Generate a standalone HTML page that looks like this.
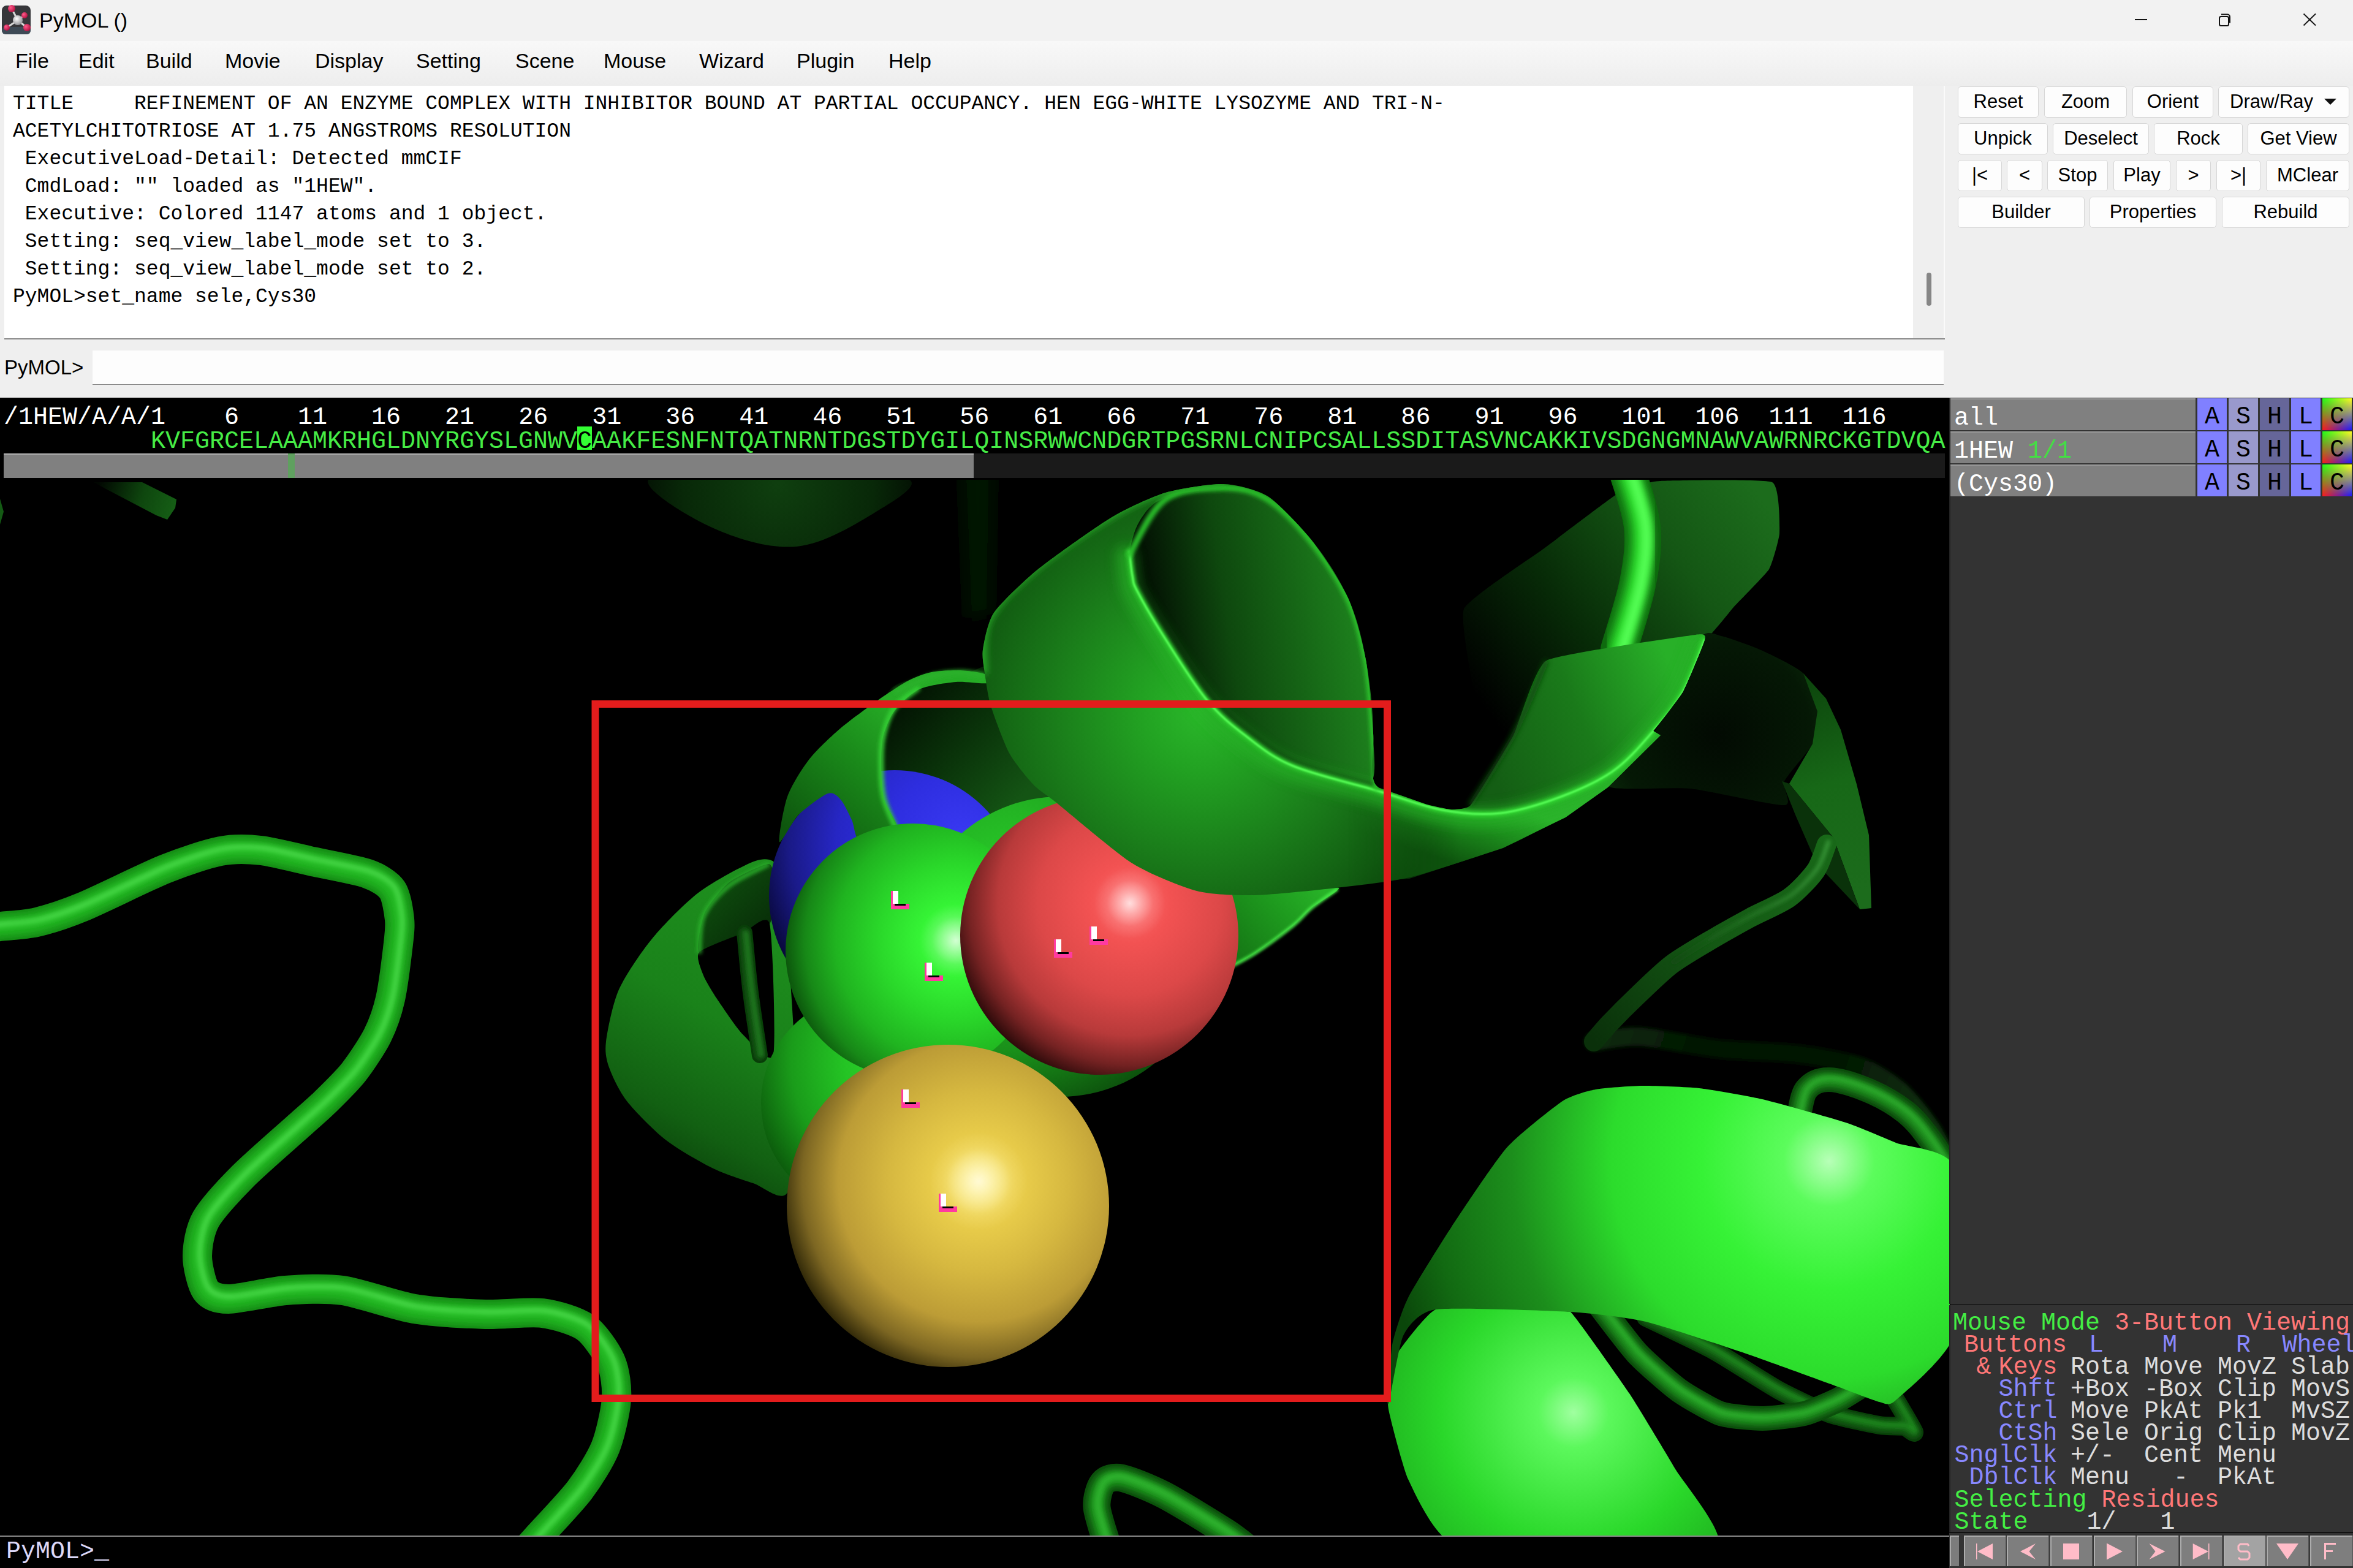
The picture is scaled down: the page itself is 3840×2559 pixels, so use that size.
<!DOCTYPE html>
<html><head><meta charset="utf-8">
<style>
html,body{margin:0;padding:0;}
body{width:3840px;height:2559px;overflow:hidden;position:relative;background:#efefef;font-family:"Liberation Sans",sans-serif;}
.a{position:absolute;white-space:pre;}
#title{left:0;top:0;width:3840px;height:67px;background:#f2f2f2;}
#menubar{left:0;top:67px;width:3840px;height:73px;background:linear-gradient(#f8f8f8,#f3f3f3 50%,#ededed);}
.menu{position:absolute;top:79px;font-size:34px;color:#000;line-height:40px;}
#out{left:7px;top:140px;width:3115px;height:412px;background:#fff;}
#outscroll{left:3122px;top:140px;width:50px;height:412px;background:#efefef;border-right:2px solid #fafafa;}
#outline{left:7px;top:552px;width:3167px;height:1.5px;background:#8a8a8a;}
.mono{font-family:"Liberation Mono",monospace;font-size:33px;color:#000;}
#inp{left:151px;top:572px;width:3021px;height:55px;background:#fdfdfd;border-bottom:1.5px solid #8a8a8a;}
.btn{position:absolute;box-sizing:border-box;background:#fdfdfd;border:1.5px solid #d6d6d6;border-radius:5px;font-size:31px;color:#000;text-align:center;line-height:48px;}
#gl{left:0;top:649px;width:3840px;height:1910px;background:#000;overflow:hidden;}
.px{font-family:"Liberation Mono",monospace;font-size:40px;line-height:40px;}
</style></head><body>
<div id="title" class="a"></div>
<div id="menubar" class="a"></div>
<!-- icon -->
<svg class="a" style="left:0;top:0" width="60" height="64" viewBox="0 0 60 64"><defs><radialGradient id="icg" cx="0.4" cy="0.35" r="0.7"><stop offset="0" stop-color="#ffffff"/><stop offset="1" stop-color="#8a8a90"/></radialGradient><radialGradient id="icp" cx="0.35" cy="0.35" r="0.7"><stop offset="0" stop-color="#ff5a8a"/><stop offset="1" stop-color="#b01040"/></radialGradient></defs>
<rect x="3" y="9" width="47" height="47" rx="8" fill="#36363a"/><rect x="3" y="44" width="47" height="12" rx="6" fill="#3e4a56"/>
<path d="M19,14 L29,33 M40,25 L29,33 M44,45 L29,33 M11,45 L29,33" stroke="#d8d8d8" stroke-width="3"/>
<circle cx="29" cy="33" r="8" fill="url(#icg)"/><circle cx="19" cy="14" r="6" fill="url(#icp)"/><circle cx="40" cy="25" r="5" fill="url(#icp)"/><circle cx="44" cy="45" r="6" fill="url(#icp)"/><circle cx="11" cy="45" r="5" fill="url(#icp)"/></svg>
<div class="a" style="left:64px;top:13px;font-size:34px;line-height:40px;color:#000;">PyMOL ()</div>
<!-- window controls -->
<svg class="a" style="left:3440px;top:0" width="400" height="67" viewBox="3440 0 400 67">
<rect x="3484" y="31" width="20" height="2" fill="#111"/>
<rect x="3622" y="27" width="15" height="15" rx="2.5" fill="none" stroke="#111" stroke-width="2"/>
<path d="M3625,23.5 h10 a4,4 0 0 1 4,4 v10" fill="none" stroke="#111" stroke-width="2"/>
<path d="M3759.5,22.5 L3779,41.5 M3779,22.5 L3759.5,41.5" stroke="#111" stroke-width="1.8"/>
</svg>
<div class="menu" style="left:25px">File</div>
<div class="menu" style="left:128px">Edit</div>
<div class="menu" style="left:238px">Build</div>
<div class="menu" style="left:367px">Movie</div>
<div class="menu" style="left:514px">Display</div>
<div class="menu" style="left:679px">Setting</div>
<div class="menu" style="left:841px">Scene</div>
<div class="menu" style="left:985px">Mouse</div>
<div class="menu" style="left:1141px">Wizard</div>
<div class="menu" style="left:1300px">Plugin</div>
<div class="menu" style="left:1450px">Help</div>

<div id="out" class="a"></div>
<div id="outscroll" class="a"></div>
<div class="a" style="left:3144px;top:445px;width:7.5px;height:54px;border-radius:4px;background:#868686;"></div>
<div id="outline" class="a"></div>
<div class="a mono" style="left:21px;top:147px;line-height:45px;">TITLE     REFINEMENT OF AN ENZYME COMPLEX WITH INHIBITOR BOUND AT PARTIAL OCCUPANCY. HEN EGG-WHITE LYSOZYME AND TRI-N-
ACETYLCHITOTRIOSE AT 1.75 ANGSTROMS RESOLUTION
 ExecutiveLoad-Detail: Detected mmCIF
 CmdLoad: "" loaded as "1HEW".
 Executive: Colored 1147 atoms and 1 object.
 Setting: seq_view_label_mode set to 3.
 Setting: seq_view_label_mode set to 2.
PyMOL&gt;set_name sele,Cys30</div>

<div class="a" style="left:7px;top:580px;font-size:33px;line-height:40px;">PyMOL&gt;</div>
<div id="inp" class="a"></div>

<!-- buttons -->
<div class="btn" style="left:3195px;top:141px;width:132px;height:51px;">Reset</div>
<div class="btn" style="left:3336px;top:141px;width:135px;height:51px;">Zoom</div>
<div class="btn" style="left:3480px;top:141px;width:132px;height:51px;">Orient</div>
<div class="btn" style="left:3620px;top:141px;width:214px;height:51px;text-align:left;padding-left:18px;">Draw/Ray</div>
<svg class="a" style="left:3790px;top:155px" width="28" height="20"><polygon points="3,6 23,6 13,16" fill="#111"/></svg>
<div class="btn" style="left:3195px;top:201px;width:147px;height:51px;">Unpick</div>
<div class="btn" style="left:3350px;top:201px;width:157px;height:51px;">Deselect</div>
<div class="btn" style="left:3515px;top:201px;width:145px;height:51px;">Rock</div>
<div class="btn" style="left:3668px;top:201px;width:166px;height:51px;">Get View</div>
<div class="btn" style="left:3195px;top:261px;width:72px;height:51px;">|&lt;</div>
<div class="btn" style="left:3275px;top:261px;width:58px;height:51px;">&lt;</div>
<div class="btn" style="left:3341px;top:261px;width:99px;height:51px;">Stop</div>
<div class="btn" style="left:3449px;top:261px;width:93px;height:51px;">Play</div>
<div class="btn" style="left:3551px;top:261px;width:57px;height:51px;">&gt;</div>
<div class="btn" style="left:3617px;top:261px;width:72px;height:51px;">&gt;|</div>
<div class="btn" style="left:3698px;top:261px;width:136px;height:51px;">MClear</div>
<div class="btn" style="left:3195px;top:321px;width:207px;height:51px;">Builder</div>
<div class="btn" style="left:3410px;top:321px;width:207px;height:51px;">Properties</div>
<div class="btn" style="left:3626px;top:321px;width:208px;height:51px;">Rebuild</div>

<div id="gl" class="a">
<div id="scene" class="a" style="left:0;top:0;width:3182px;height:1857px;"><svg width="3182" height="1857" viewBox="0 649 3182 1857"><defs><filter id="bl1" x="-50%" y="-50%" width="200%" height="200%"><feGaussianBlur stdDeviation="1"/></filter><filter id="bl2" x="-50%" y="-50%" width="200%" height="200%"><feGaussianBlur stdDeviation="2"/></filter><filter id="bl3" x="-50%" y="-50%" width="200%" height="200%"><feGaussianBlur stdDeviation="3"/></filter><filter id="bl4" x="-50%" y="-50%" width="200%" height="200%"><feGaussianBlur stdDeviation="4"/></filter><filter id="bl5" x="-50%" y="-50%" width="200%" height="200%"><feGaussianBlur stdDeviation="5"/></filter><filter id="bl6" x="-50%" y="-50%" width="200%" height="200%"><feGaussianBlur stdDeviation="6"/></filter><filter id="bl8" x="-50%" y="-50%" width="200%" height="200%"><feGaussianBlur stdDeviation="8"/></filter><filter id="bl10" x="-50%" y="-50%" width="200%" height="200%"><feGaussianBlur stdDeviation="10"/></filter><filter id="bl12" x="-50%" y="-50%" width="200%" height="200%"><feGaussianBlur stdDeviation="12"/></filter><filter id="bl15" x="-50%" y="-50%" width="200%" height="200%"><feGaussianBlur stdDeviation="15"/></filter><filter id="bl20" x="-50%" y="-50%" width="200%" height="200%"><feGaussianBlur stdDeviation="20"/></filter><filter id="bl30" x="-50%" y="-50%" width="200%" height="200%"><feGaussianBlur stdDeviation="30"/></filter><filter id="bl40" x="-50%" y="-50%" width="200%" height="200%"><feGaussianBlur stdDeviation="40"/></filter><filter id="b3" x="-10%" y="-10%" width="120%" height="120%"><feGaussianBlur stdDeviation="4"/></filter><filter id="b8" x="-20%" y="-20%" width="140%" height="140%"><feGaussianBlur stdDeviation="8"/></filter><filter id="b20" x="-30%" y="-30%" width="160%" height="160%"><feGaussianBlur stdDeviation="20"/></filter><radialGradient id="gTopEll" gradientUnits="userSpaceOnUse" cx="1270" cy="790" r="260" fx="1270" fy="790"><stop offset="0" stop-color="#0f3f0f"/><stop offset="0.6" stop-color="#082808"/><stop offset="1" stop-color="#010501"/></radialGradient><linearGradient id="gFaint" gradientUnits="userSpaceOnUse" x1="1560" y1="900" x2="1620" y2="900"><stop offset="0" stop-color="#000"/><stop offset="0.5" stop-color="#041404"/><stop offset="1" stop-color="#000"/></linearGradient><linearGradient id="gT2" gradientUnits="userSpaceOnUse" x1="160" y1="790" x2="290" y2="830"><stop offset="0" stop-color="#010601"/><stop offset="0.55" stop-color="#0e460e"/><stop offset="1" stop-color="#166016"/></linearGradient><linearGradient id="gA" gradientUnits="userSpaceOnUse" x1="2420" y1="1150" x2="2880" y2="820"><stop offset="0" stop-color="#000"/><stop offset="0.35" stop-color="#072a07"/><stop offset="0.7" stop-color="#145614"/><stop offset="1" stop-color="#1c6c1c"/></linearGradient><mask id="tm1" maskUnits="userSpaceOnUse" x="0" y="600" width="3200" height="2000"><path d="M2656.0,770.0 C2660.0,785.0 2677.2,830.0 2680.0,860.0 C2682.8,890.0 2679.3,916.7 2673.0,950.0 C2666.7,983.3 2647.2,1041.7 2642.0,1060.0" fill="none" stroke="#fff" stroke-width="60.0" stroke-linecap="round" stroke-linejoin="round"/></mask><radialGradient id="gD" gradientUnits="userSpaceOnUse" cx="2800" cy="1200" r="260" fx="2800" fy="1200"><stop offset="0" stop-color="#020a02"/><stop offset="0.6" stop-color="#051805"/><stop offset="1" stop-color="#0e3c0e"/></radialGradient><linearGradient id="gE" gradientUnits="userSpaceOnUse" x1="2950" y1="1100" x2="3050" y2="1450"><stop offset="0" stop-color="#0c440c"/><stop offset="0.5" stop-color="#176817"/><stop offset="1" stop-color="#1c6c1c"/></linearGradient><linearGradient id="gT4b" gradientUnits="userSpaceOnUse" x1="2600" y1="1700" x2="3180" y2="1900"><stop offset="0" stop-color="#0a2c0a"/><stop offset="0.3" stop-color="#041404"/><stop offset="0.6" stop-color="#041404"/><stop offset="1" stop-color="#0e3a0e"/></linearGradient><linearGradient id="gT4" gradientUnits="userSpaceOnUse" x1="2981" y1="1375" x2="2601" y2="1700"><stop offset="0" stop-color="#186818"/><stop offset="0.5" stop-color="#145814"/><stop offset="1" stop-color="#0a300a"/></linearGradient><linearGradient id="gT4h" gradientUnits="userSpaceOnUse" x1="2981" y1="1375" x2="2700" y2="1600"><stop offset="0" stop-color="#3a9a3a"/><stop offset="0.6" stop-color="#1e6a1e"/><stop offset="1" stop-color="#0e3e0e"/></linearGradient><mask id="tm2" maskUnits="userSpaceOnUse" x="0" y="600" width="3200" height="2000"><path d="M-30.0,1515.0 C-26.0,1514.6 -12.0,1513.3 0.0,1512.0 C12.0,1510.7 42.0,1509.3 60.0,1505.0 C78.0,1500.7 107.0,1491.6 135.0,1480.0 C163.0,1468.4 240.0,1430.1 270.0,1418.0 C300.0,1405.9 339.2,1393.0 360.0,1389.0 C380.8,1385.0 406.0,1385.7 426.0,1388.0 C446.0,1390.3 486.8,1400.9 510.0,1406.0 C533.2,1411.1 582.7,1419.9 600.0,1426.0 C617.3,1432.1 633.1,1442.1 640.0,1452.0 C646.9,1461.9 650.7,1488.3 652.0,1500.0 C653.3,1511.7 652.0,1522.7 650.0,1540.0 C648.0,1557.3 641.5,1610.0 637.0,1630.0 C632.5,1650.0 624.0,1674.0 616.0,1690.0 C608.0,1706.0 588.6,1735.3 577.0,1750.0 C565.4,1764.7 540.7,1788.5 529.0,1800.0 C517.3,1811.5 506.7,1820.0 489.0,1836.0 C471.3,1852.0 416.4,1899.5 396.0,1920.0 C375.6,1940.5 345.9,1972.7 336.0,1990.0 C326.1,2007.3 322.0,2034.5 322.0,2050.0 C322.0,2065.5 329.2,2096.7 336.0,2106.0 C342.8,2115.3 355.7,2120.0 373.0,2120.0 C390.3,2120.0 441.2,2107.9 466.0,2106.0 C490.8,2104.1 531.0,2102.0 559.0,2106.0 C587.0,2110.0 644.9,2130.8 676.0,2136.0 C707.1,2141.2 764.1,2144.1 792.0,2145.0 C819.9,2145.9 863.3,2140.2 885.0,2143.0 C906.7,2145.8 940.1,2155.5 955.0,2166.0 C969.9,2176.5 990.2,2206.4 997.0,2222.0 C1003.8,2237.6 1007.2,2264.3 1006.0,2283.0 C1004.8,2301.7 996.0,2342.1 988.0,2362.0 C980.0,2381.9 960.9,2412.3 946.0,2432.0 C931.1,2451.7 890.1,2494.3 876.0,2510.0 C861.9,2525.7 844.8,2544.7 840.0,2550.0" fill="none" stroke="#fff" stroke-width="48.0" stroke-linecap="round" stroke-linejoin="round"/></mask><mask id="tm3" maskUnits="userSpaceOnUse" x="0" y="600" width="3200" height="2000"><path d="M1810.0,2530.0 C1807.3,2520.7 1791.3,2474.7 1790.0,2460.0 C1788.7,2445.3 1794.7,2426.4 1800.0,2420.0 C1805.3,2413.6 1816.7,2409.3 1830.0,2412.0 C1843.3,2414.7 1877.3,2428.3 1900.0,2440.0 C1922.7,2451.7 1981.3,2488.0 2000.0,2500.0 C2018.7,2512.0 2034.7,2526.0 2040.0,2530.0" fill="none" stroke="#fff" stroke-width="45.0" stroke-linecap="round" stroke-linejoin="round"/></mask><linearGradient id="gH3" gradientUnits="userSpaceOnUse" x1="1250" y1="1450" x2="1010" y2="1880"><stop offset="0" stop-color="#1e901e"/><stop offset="0.45" stop-color="#1a821a"/><stop offset="0.8" stop-color="#126012"/><stop offset="1" stop-color="#0a400a"/></linearGradient><linearGradient id="gH3f" gradientUnits="userSpaceOnUse" x1="1150" y1="1450" x2="1260" y2="1560"><stop offset="0" stop-color="#0e4e0e"/><stop offset="1" stop-color="#062406"/></linearGradient><mask id="tm4" maskUnits="userSpaceOnUse" x="0" y="600" width="3200" height="2000"><path d="M1215.0,1522.0 C1216.7,1538.3 1220.8,1586.7 1225.0,1620.0 C1229.2,1653.3 1237.5,1705.0 1240.0,1722.0" fill="none" stroke="#fff" stroke-width="26.0" stroke-linecap="round" stroke-linejoin="round"/></mask><linearGradient id="gH2in" gradientUnits="userSpaceOnUse" x1="1460" y1="1160" x2="1640" y2="1330"><stop offset="0" stop-color="#031403"/><stop offset="0.5" stop-color="#0a340a"/><stop offset="1" stop-color="#145414"/></linearGradient><radialGradient id="gBlue" gradientUnits="userSpaceOnUse" cx="1570" cy="1380" r="342.20058308913997" fx="1570" fy="1380"><stop offset="0" stop-color="#3a3af4"/><stop offset="0.35" stop-color="#2e2ee0"/><stop offset="0.6" stop-color="#2626c4"/><stop offset="0.82" stop-color="#1a1a88"/><stop offset="1" stop-color="#08083a"/></radialGradient><linearGradient id="gH2" gradientUnits="userSpaceOnUse" x1="1280" y1="1350" x2="1460" y2="1150"><stop offset="0" stop-color="#0e560e"/><stop offset="0.6" stop-color="#1a8a1a"/><stop offset="1" stop-color="#26ac26"/></linearGradient><radialGradient id="gG2" gradientUnits="userSpaceOnUse" cx="1510" cy="1730" r="292.0175425099138" fx="1510" fy="1730"><stop offset="0" stop-color="#34e034"/><stop offset="0.45" stop-color="#24c424"/><stop offset="0.75" stop-color="#1a9c1a"/><stop offset="1" stop-color="#0c5c0c"/></radialGradient><radialGradient id="gG3" gradientUnits="userSpaceOnUse" cx="1640" cy="1450" r="375.862523283024" fx="1640" fy="1450"><stop offset="0" stop-color="#2ad02a"/><stop offset="0.4" stop-color="#22b022"/><stop offset="0.7" stop-color="#1a901a"/><stop offset="1" stop-color="#0c500c"/></radialGradient><radialGradient id="gG1" gradientUnits="userSpaceOnUse" cx="1560" cy="1535" r="280.034713853808" fx="1560" fy="1535"><stop offset="0" stop-color="#60ff60"/><stop offset="0.2" stop-color="#36f536"/><stop offset="0.45" stop-color="#2ad82a"/><stop offset="0.7" stop-color="#20b420"/><stop offset="0.88" stop-color="#178817"/><stop offset="1" stop-color="#0c560c"/></radialGradient><radialGradient id="gG1s"><stop offset="0" stop-color="#d8ffd8" stop-opacity="0.95"/><stop offset="0.3" stop-color="#d8ffd8" stop-opacity="0.55"/><stop offset="0.65" stop-color="#d8ffd8" stop-opacity="0.15"/><stop offset="1" stop-color="#d8ffd8" stop-opacity="0"/></radialGradient><linearGradient id="gRib" gradientUnits="userSpaceOnUse" x1="2000" y1="1600" x2="2180" y2="1450"><stop offset="0" stop-color="#126a12"/><stop offset="0.6" stop-color="#1e9a1e"/><stop offset="1" stop-color="#2ab82a"/></linearGradient><radialGradient id="gRed" gradientUnits="userSpaceOnUse" cx="1844" cy="1474" r="299.8628849277875" fx="1844" fy="1474"><stop offset="0" stop-color="#ff6c6c"/><stop offset="0.22" stop-color="#f25252"/><stop offset="0.5" stop-color="#dc4848"/><stop offset="0.72" stop-color="#b83a3a"/><stop offset="0.88" stop-color="#742222"/><stop offset="1" stop-color="#2c0a0a"/></radialGradient><radialGradient id="gReds"><stop offset="0" stop-color="#ffe4e4" stop-opacity="0.95"/><stop offset="0.3" stop-color="#ffe4e4" stop-opacity="0.55"/><stop offset="0.65" stop-color="#ffe4e4" stop-opacity="0.15"/><stop offset="1" stop-color="#ffe4e4" stop-opacity="0"/></radialGradient><radialGradient id="gYel" gradientUnits="userSpaceOnUse" cx="1597" cy="1928" r="327.0312423743285" fx="1597" fy="1928"><stop offset="0" stop-color="#fff07a"/><stop offset="0.18" stop-color="#ecd04c"/><stop offset="0.45" stop-color="#d6b840"/><stop offset="0.7" stop-color="#bc9c36"/><stop offset="0.88" stop-color="#7c6622"/><stop offset="1" stop-color="#302808"/></radialGradient><radialGradient id="gYels"><stop offset="0" stop-color="#fffad8" stop-opacity="0.95"/><stop offset="0.3" stop-color="#fffad8" stop-opacity="0.55"/><stop offset="0.65" stop-color="#fffad8" stop-opacity="0.15"/><stop offset="1" stop-color="#fffad8" stop-opacity="0"/></radialGradient><radialGradient id="gH1" gradientUnits="userSpaceOnUse" cx="1960" cy="1160" r="440" fx="1960" fy="1160"><stop offset="0" stop-color="#2ab82a"/><stop offset="0.22" stop-color="#22a222"/><stop offset="0.55" stop-color="#1a7c1a"/><stop offset="0.85" stop-color="#115a11"/><stop offset="1" stop-color="#0a420a"/></radialGradient><linearGradient id="gH1in" gradientUnits="userSpaceOnUse" x1="1880" y1="1000" x2="2220" y2="950"><stop offset="0" stop-color="#031203"/><stop offset="0.35" stop-color="#0e480e"/><stop offset="1" stop-color="#1e841e"/></linearGradient><linearGradient id="gLow" gradientUnits="userSpaceOnUse" x1="2470" y1="1318" x2="2430" y2="1430"><stop offset="0" stop-color="#2cb42c"/><stop offset="0.35" stop-color="#1e921e"/><stop offset="1" stop-color="#0e540e"/></linearGradient><linearGradient id="gLowM" gradientUnits="userSpaceOnUse" x1="2200" y1="0" x2="2380" y2="0"><stop offset="0" stop-color="#000"/><stop offset="1" stop-color="#fff"/></linearGradient><mask id="mLow" maskUnits="userSpaceOnUse" x="2100" y="1100" width="800" height="400"><rect x="2100" y="1100" width="800" height="400" fill="url(#gLowM)"/></mask><linearGradient id="gC" gradientUnits="userSpaceOnUse" x1="2430" y1="1250" x2="2740" y2="1120"><stop offset="0" stop-color="#145e14"/><stop offset="0.5" stop-color="#1a7a1a"/><stop offset="1" stop-color="#28b028"/></linearGradient><clipPath id="cH1"><path d="M1604.0,1060.0 C1605.8,1048.6 1611.5,1015.3 1622.0,1000.0 C1632.5,984.7 1671.7,947.1 1694.0,929.0 C1716.3,910.9 1788.7,859.6 1813.0,845.0 C1837.3,830.4 1880.5,810.4 1902.0,804.0 C1923.5,797.6 1977.5,789.3 1997.0,790.0 C2016.5,790.7 2052.3,799.4 2069.0,810.0 C2085.7,820.6 2124.7,861.6 2140.0,881.0 C2155.3,900.4 2189.6,953.1 2200.0,976.0 C2210.4,998.9 2224.2,1051.2 2229.0,1077.0 C2233.8,1102.8 2239.0,1173.1 2241.0,1197.0 C2243.0,1220.9 2233.3,1267.9 2246.0,1282.0 C2258.7,1296.1 2326.3,1312.8 2350.0,1318.0 C2373.7,1323.2 2425.9,1328.9 2449.0,1327.0 C2472.1,1325.1 2527.5,1307.1 2548.0,1302.0 C2568.5,1296.9 2627.1,1278.1 2625.0,1283.0 C2622.9,1287.9 2550.1,1332.3 2530.0,1344.0 C2509.9,1355.7 2479.8,1372.7 2453.0,1383.0 C2426.2,1393.3 2331.7,1424.3 2300.0,1432.0 C2268.3,1439.7 2210.4,1445.6 2181.0,1449.0 C2151.6,1452.4 2074.6,1460.4 2048.0,1461.0 C2021.4,1461.6 1976.3,1460.1 1953.0,1454.0 C1929.7,1447.9 1874.7,1425.8 1848.0,1409.0 C1821.3,1392.2 1742.9,1325.0 1724.0,1310.0 C1705.1,1295.0 1695.0,1289.5 1686.0,1280.0 C1677.0,1270.5 1655.0,1243.9 1647.0,1229.0 C1639.0,1214.1 1621.7,1167.3 1617.0,1152.0 C1612.3,1136.7 1608.5,1108.7 1607.0,1098.0 C1605.5,1087.3 1602.2,1071.4 1604.0,1060.0Z"/><path d="M2524.0,1078.0 C2543.8,1067.1 2749.8,1038.3 2767.0,1036.0 C2784.2,1033.7 2783.3,1037.9 2782.0,1044.0 C2780.7,1050.1 2752.6,1118.1 2747.0,1128.0 C2741.4,1137.9 2705.6,1184.3 2698.0,1193.0 C2690.4,1201.7 2643.0,1250.9 2633.0,1258.0 C2623.0,1265.1 2560.3,1295.4 2548.0,1300.0 C2535.7,1304.6 2461.9,1325.5 2449.0,1327.0 C2436.1,1328.5 2357.3,1322.8 2354.0,1322.0 C2350.7,1321.2 2391.3,1323.1 2399.0,1315.0 C2406.7,1306.9 2461.7,1215.8 2470.0,1200.0 C2478.3,1184.2 2504.2,1088.9 2524.0,1078.0Z"/><path d="M2200.0,1270.0 L2246.0,1284.0 L2354.0,1322.0 L2449.0,1327.0 L2548.0,1300.0 L2633.0,1258.0 L2698.0,1193.0 L2710.0,1200.0 L2624.0,1285.0 L2555.0,1334.0 L2453.0,1384.0 L2300.0,1434.0 L2200.0,1441.0Z"/></clipPath><radialGradient id="gBR" gradientUnits="userSpaceOnUse" cx="2985" cy="1895" r="740" fx="2985" fy="1895"><stop offset="0" stop-color="#b8ffb8"/><stop offset="0.1" stop-color="#5cfc5c"/><stop offset="0.28" stop-color="#36f236"/><stop offset="0.48" stop-color="#2cdc2c"/><stop offset="0.7" stop-color="#1c8e1c"/><stop offset="0.88" stop-color="#126a12"/><stop offset="1" stop-color="#0a460a"/></radialGradient><radialGradient id="gBR2" gradientUnits="userSpaceOnUse" cx="2568" cy="2305" r="480" fx="2568" fy="2305"><stop offset="0" stop-color="#a0ffa0"/><stop offset="0.12" stop-color="#5cf85c"/><stop offset="0.45" stop-color="#2ad82a"/><stop offset="0.8" stop-color="#1aa01a"/><stop offset="1" stop-color="#107010"/></radialGradient><mask id="tm5" maskUnits="userSpaceOnUse" x="0" y="600" width="3200" height="2000"><path d="M2935.0,1825.0 C2937.2,1817.2 2939.7,1788.5 2948.0,1778.0 C2956.3,1767.5 2968.0,1761.7 2985.0,1762.0 C3002.0,1762.3 3029.2,1771.2 3050.0,1780.0 C3070.8,1788.8 3093.3,1801.7 3110.0,1815.0 C3126.7,1828.3 3137.5,1843.3 3150.0,1860.0 C3162.5,1876.7 3179.2,1905.8 3185.0,1915.0" fill="none" stroke="#fff" stroke-width="40.0" stroke-linecap="round" stroke-linejoin="round"/></mask><mask id="tm6" maskUnits="userSpaceOnUse" x="0" y="600" width="3200" height="2000"><path d="M2686.0,2150.0 C2696.9,2155.3 2773.3,2191.1 2795.0,2203.0 C2816.7,2214.9 2884.0,2258.6 2903.0,2269.0 C2922.0,2279.4 2968.6,2301.3 2985.0,2307.0 C3001.4,2312.7 3054.8,2323.9 3067.0,2326.0 C3079.2,2328.1 3101.3,2326.9 3107.0,2328.0 C3112.7,2329.1 3125.3,2341.3 3124.0,2337.0 C3122.7,2332.7 3097.0,2290.2 3094.0,2285.0" fill="none" stroke="#fff" stroke-width="30.0" stroke-linecap="round" stroke-linejoin="round"/></mask><mask id="tm7" maskUnits="userSpaceOnUse" x="0" y="600" width="3200" height="2000"><path d="M2610.0,2130.0 C2616.2,2137.9 2659.0,2195.1 2672.0,2209.0 C2685.0,2222.9 2726.4,2259.2 2740.0,2269.0 C2753.6,2278.8 2794.4,2302.4 2808.0,2307.0 C2821.6,2311.6 2862.4,2315.0 2876.0,2315.0 C2889.6,2315.0 2931.7,2310.0 2944.0,2307.0 C2956.3,2304.0 2989.4,2289.7 2999.0,2285.0 C3008.6,2280.3 3035.9,2262.5 3040.0,2260.0" fill="none" stroke="#fff" stroke-width="40.0" stroke-linecap="round" stroke-linejoin="round"/></mask></defs><path d="M1060.0,781.0 C1078.3,767.8 1200.0,781.0 1270.0,781.0 C1340.0,781.0 1453.3,772.0 1480.0,781.0 C1506.7,790.0 1460.0,816.5 1430.0,835.0 C1400.0,853.5 1345.0,887.8 1300.0,892.0 C1255.0,896.2 1200.0,878.5 1160.0,860.0 C1120.0,841.5 1041.7,794.2 1060.0,781.0Z" fill="url(#gTopEll)"/>
<path d="M1568.0,760.0 L1622.0,760.0 L1618.0,1000.0 L1578.0,1010.0Z" fill="#041404" filter="url(#bl12)"/>
<path d="M153.0,787.0 L232.0,787.0 L288.0,815.0 L286.0,829.0 L273.0,848.0 L255.0,841.0 L173.0,798.0Z" fill="url(#gT2)"/>
<path d="M0.0,814.0 L6.0,835.0 L0.0,856.0Z" fill="#145a14"/>
<path d="M2389.0,994.0 C2396.3,977.0 2502.7,907.9 2520.0,895.0 C2537.3,882.1 2635.3,807.3 2648.0,800.0 C2660.7,792.7 2693.7,785.9 2710.0,785.0 C2726.3,784.1 2879.1,781.3 2892.0,787.0 C2904.9,792.7 2904.3,860.5 2904.0,870.0 C2903.7,879.5 2891.9,921.0 2887.0,929.0 C2882.1,937.0 2837.3,982.0 2830.0,990.0 C2822.7,998.0 2792.3,1038.3 2777.0,1049.0 C2761.7,1059.7 2621.9,1138.1 2600.0,1150.0 C2578.1,1161.9 2461.7,1228.0 2449.0,1228.0 C2436.3,1228.0 2414.0,1165.6 2410.0,1150.0 C2406.0,1134.4 2381.7,1011.0 2389.0,994.0Z" fill="url(#gA)"/>
<path d="M2656.0,770.0 C2660.0,785.0 2677.2,830.0 2680.0,860.0 C2682.8,890.0 2679.3,916.7 2673.0,950.0 C2666.7,983.3 2647.2,1041.7 2642.0,1060.0" fill="none" stroke="#0e6a0e" stroke-width="60.0" stroke-linecap="round" stroke-linejoin="round"/>
<g mask="url(#tm1)">
<path d="M2656.0,770.0 C2660.0,785.0 2677.2,830.0 2680.0,860.0 C2682.8,890.0 2679.3,916.7 2673.0,950.0 C2666.7,983.3 2647.2,1041.7 2642.0,1060.0" fill="none" stroke="#2ad82a" stroke-width="36.0" stroke-linecap="round" stroke-linejoin="round" filter="url(#bl8)"/>
<path d="M2656.0,770.0 C2660.0,785.0 2677.2,830.0 2680.0,860.0 C2682.8,890.0 2679.3,916.7 2673.0,950.0 C2666.7,983.3 2647.2,1041.7 2642.0,1060.0" transform="translate(6,0)" fill="none" stroke="#55ff55" stroke-width="18.0" stroke-linecap="round" stroke-linejoin="round" filter="url(#bl6)"/>
</g>
<path d="M2774.0,1042.0 C2785.1,1025.9 2799.0,1036.1 2809.0,1038.0 C2819.0,1039.9 2860.6,1054.9 2874.0,1061.0 C2887.4,1067.1 2933.8,1089.0 2943.0,1099.0 C2952.2,1109.0 2964.5,1149.5 2966.0,1161.0 C2967.5,1172.5 2963.4,1202.6 2958.0,1214.0 C2952.6,1225.4 2916.6,1265.0 2912.0,1275.0 C2907.4,1285.0 2927.3,1312.8 2912.0,1314.0 C2896.7,1315.2 2787.7,1290.1 2759.0,1287.0 C2730.3,1283.9 2631.1,1291.8 2625.0,1283.0 C2618.9,1274.2 2683.1,1223.1 2698.0,1199.0 C2712.9,1174.9 2762.9,1058.1 2774.0,1042.0Z" fill="url(#gD)"/>
<path d="M2943.0,1099.0 L2980.0,1140.0 L3004.0,1191.0 L3030.0,1280.0 L3050.0,1363.0 L3054.0,1482.0 L3035.0,1484.0 L2992.0,1367.0 L2920.0,1279.0 L2958.0,1214.0 L2966.0,1161.0Z" fill="url(#gE)"/>
<path d="M2908.0,1275.0 L2920.0,1279.0 L2992.0,1367.0 L3035.0,1484.0 L2965.0,1410.0 L2930.0,1330.0Z" fill="#0a320a"/>
<path d="M2601.0,1700.0 C2611.1,1698.9 2649.8,1690.4 2677.0,1692.0 C2704.2,1693.6 2771.0,1708.3 2805.0,1712.0 C2839.0,1715.7 2901.5,1716.3 2932.0,1720.0 C2962.5,1723.7 3011.6,1732.0 3034.0,1740.0 C3056.4,1748.0 3084.5,1766.7 3100.0,1780.0 C3115.5,1793.3 3138.7,1823.3 3150.0,1840.0 C3161.3,1856.7 3180.3,1896.3 3185.0,1905.0" fill="none" stroke="url(#gT4b)" stroke-width="30" stroke-linecap="round" stroke-linejoin="round" filter="url(#bl3)"/>
<path d="M2981.0,1378.0 C2978.6,1383.7 2971.1,1409.4 2963.0,1421.0 C2954.9,1432.6 2934.3,1454.7 2920.0,1465.0 C2905.7,1475.3 2873.1,1488.8 2856.0,1498.0 C2838.9,1507.2 2809.1,1523.9 2792.0,1534.0 C2774.9,1544.1 2744.0,1561.9 2728.0,1574.0 C2712.0,1586.1 2685.6,1612.1 2672.0,1625.0 C2658.4,1637.9 2635.5,1661.0 2626.0,1671.0 C2616.5,1681.0 2604.3,1696.1 2601.0,1700.0" fill="none" stroke="url(#gT4)" stroke-width="32" stroke-linecap="round" stroke-linejoin="round"/>
<path d="M2981.0,1378.0 C2978.6,1383.7 2971.1,1409.4 2963.0,1421.0 C2954.9,1432.6 2934.3,1454.7 2920.0,1465.0 C2905.7,1475.3 2873.1,1488.8 2856.0,1498.0 C2838.9,1507.2 2809.1,1523.9 2792.0,1534.0 C2774.9,1544.1 2736.5,1568.7 2728.0,1574.0" transform="translate(3,-4)" fill="none" stroke="url(#gT4h)" stroke-width="6" stroke-linecap="round" filter="url(#bl3)"/>
<path d="M-30.0,1515.0 C-26.0,1514.6 -12.0,1513.3 0.0,1512.0 C12.0,1510.7 42.0,1509.3 60.0,1505.0 C78.0,1500.7 107.0,1491.6 135.0,1480.0 C163.0,1468.4 240.0,1430.1 270.0,1418.0 C300.0,1405.9 339.2,1393.0 360.0,1389.0 C380.8,1385.0 406.0,1385.7 426.0,1388.0 C446.0,1390.3 486.8,1400.9 510.0,1406.0 C533.2,1411.1 582.7,1419.9 600.0,1426.0 C617.3,1432.1 633.1,1442.1 640.0,1452.0 C646.9,1461.9 650.7,1488.3 652.0,1500.0 C653.3,1511.7 652.0,1522.7 650.0,1540.0 C648.0,1557.3 641.5,1610.0 637.0,1630.0 C632.5,1650.0 624.0,1674.0 616.0,1690.0 C608.0,1706.0 588.6,1735.3 577.0,1750.0 C565.4,1764.7 540.7,1788.5 529.0,1800.0 C517.3,1811.5 506.7,1820.0 489.0,1836.0 C471.3,1852.0 416.4,1899.5 396.0,1920.0 C375.6,1940.5 345.9,1972.7 336.0,1990.0 C326.1,2007.3 322.0,2034.5 322.0,2050.0 C322.0,2065.5 329.2,2096.7 336.0,2106.0 C342.8,2115.3 355.7,2120.0 373.0,2120.0 C390.3,2120.0 441.2,2107.9 466.0,2106.0 C490.8,2104.1 531.0,2102.0 559.0,2106.0 C587.0,2110.0 644.9,2130.8 676.0,2136.0 C707.1,2141.2 764.1,2144.1 792.0,2145.0 C819.9,2145.9 863.3,2140.2 885.0,2143.0 C906.7,2145.8 940.1,2155.5 955.0,2166.0 C969.9,2176.5 990.2,2206.4 997.0,2222.0 C1003.8,2237.6 1007.2,2264.3 1006.0,2283.0 C1004.8,2301.7 996.0,2342.1 988.0,2362.0 C980.0,2381.9 960.9,2412.3 946.0,2432.0 C931.1,2451.7 890.1,2494.3 876.0,2510.0 C861.9,2525.7 844.8,2544.7 840.0,2550.0" fill="none" stroke="#128012" stroke-width="48.0" stroke-linecap="round" stroke-linejoin="round"/>
<g mask="url(#tm2)">
<path d="M-30.0,1515.0 C-26.0,1514.6 -12.0,1513.3 0.0,1512.0 C12.0,1510.7 42.0,1509.3 60.0,1505.0 C78.0,1500.7 107.0,1491.6 135.0,1480.0 C163.0,1468.4 240.0,1430.1 270.0,1418.0 C300.0,1405.9 339.2,1393.0 360.0,1389.0 C380.8,1385.0 406.0,1385.7 426.0,1388.0 C446.0,1390.3 486.8,1400.9 510.0,1406.0 C533.2,1411.1 582.7,1419.9 600.0,1426.0 C617.3,1432.1 633.1,1442.1 640.0,1452.0 C646.9,1461.9 650.7,1488.3 652.0,1500.0 C653.3,1511.7 652.0,1522.7 650.0,1540.0 C648.0,1557.3 641.5,1610.0 637.0,1630.0 C632.5,1650.0 624.0,1674.0 616.0,1690.0 C608.0,1706.0 588.6,1735.3 577.0,1750.0 C565.4,1764.7 540.7,1788.5 529.0,1800.0 C517.3,1811.5 506.7,1820.0 489.0,1836.0 C471.3,1852.0 416.4,1899.5 396.0,1920.0 C375.6,1940.5 345.9,1972.7 336.0,1990.0 C326.1,2007.3 322.0,2034.5 322.0,2050.0 C322.0,2065.5 329.2,2096.7 336.0,2106.0 C342.8,2115.3 355.7,2120.0 373.0,2120.0 C390.3,2120.0 441.2,2107.9 466.0,2106.0 C490.8,2104.1 531.0,2102.0 559.0,2106.0 C587.0,2110.0 644.9,2130.8 676.0,2136.0 C707.1,2141.2 764.1,2144.1 792.0,2145.0 C819.9,2145.9 863.3,2140.2 885.0,2143.0 C906.7,2145.8 940.1,2155.5 955.0,2166.0 C969.9,2176.5 990.2,2206.4 997.0,2222.0 C1003.8,2237.6 1007.2,2264.3 1006.0,2283.0 C1004.8,2301.7 996.0,2342.1 988.0,2362.0 C980.0,2381.9 960.9,2412.3 946.0,2432.0 C931.1,2451.7 890.1,2494.3 876.0,2510.0 C861.9,2525.7 844.8,2544.7 840.0,2550.0" fill="none" stroke="#22b822" stroke-width="34.6" stroke-linecap="round" stroke-linejoin="round" filter="url(#bl8)"/>
<path d="M-30.0,1515.0 C-26.0,1514.6 -12.0,1513.3 0.0,1512.0 C12.0,1510.7 42.0,1509.3 60.0,1505.0 C78.0,1500.7 107.0,1491.6 135.0,1480.0 C163.0,1468.4 240.0,1430.1 270.0,1418.0 C300.0,1405.9 339.2,1393.0 360.0,1389.0 C380.8,1385.0 406.0,1385.7 426.0,1388.0 C446.0,1390.3 486.8,1400.9 510.0,1406.0 C533.2,1411.1 582.7,1419.9 600.0,1426.0 C617.3,1432.1 633.1,1442.1 640.0,1452.0 C646.9,1461.9 650.7,1488.3 652.0,1500.0 C653.3,1511.7 652.0,1522.7 650.0,1540.0 C648.0,1557.3 641.5,1610.0 637.0,1630.0 C632.5,1650.0 624.0,1674.0 616.0,1690.0 C608.0,1706.0 588.6,1735.3 577.0,1750.0 C565.4,1764.7 540.7,1788.5 529.0,1800.0 C517.3,1811.5 506.7,1820.0 489.0,1836.0 C471.3,1852.0 416.4,1899.5 396.0,1920.0 C375.6,1940.5 345.9,1972.7 336.0,1990.0 C326.1,2007.3 322.0,2034.5 322.0,2050.0 C322.0,2065.5 329.2,2096.7 336.0,2106.0 C342.8,2115.3 355.7,2120.0 373.0,2120.0 C390.3,2120.0 441.2,2107.9 466.0,2106.0 C490.8,2104.1 531.0,2102.0 559.0,2106.0 C587.0,2110.0 644.9,2130.8 676.0,2136.0 C707.1,2141.2 764.1,2144.1 792.0,2145.0 C819.9,2145.9 863.3,2140.2 885.0,2143.0 C906.7,2145.8 940.1,2155.5 955.0,2166.0 C969.9,2176.5 990.2,2206.4 997.0,2222.0 C1003.8,2237.6 1007.2,2264.3 1006.0,2283.0 C1004.8,2301.7 996.0,2342.1 988.0,2362.0 C980.0,2381.9 960.9,2412.3 946.0,2432.0 C931.1,2451.7 890.1,2494.3 876.0,2510.0 C861.9,2525.7 844.8,2544.7 840.0,2550.0" transform="translate(4,-4)" fill="none" stroke="#5ae85a" stroke-width="5.8" stroke-linecap="round" stroke-linejoin="round" filter="url(#bl4)"/>
</g>
<path d="M1810.0,2530.0 C1807.3,2520.7 1791.3,2474.7 1790.0,2460.0 C1788.7,2445.3 1794.7,2426.4 1800.0,2420.0 C1805.3,2413.6 1816.7,2409.3 1830.0,2412.0 C1843.3,2414.7 1877.3,2428.3 1900.0,2440.0 C1922.7,2451.7 1981.3,2488.0 2000.0,2500.0 C2018.7,2512.0 2034.7,2526.0 2040.0,2530.0" fill="none" stroke="#0c4a0c" stroke-width="45.0" stroke-linecap="round" stroke-linejoin="round"/>
<g mask="url(#tm3)">
<path d="M1810.0,2530.0 C1807.3,2520.7 1791.3,2474.7 1790.0,2460.0 C1788.7,2445.3 1794.7,2426.4 1800.0,2420.0 C1805.3,2413.6 1816.7,2409.3 1830.0,2412.0 C1843.3,2414.7 1877.3,2428.3 1900.0,2440.0 C1922.7,2451.7 1981.3,2488.0 2000.0,2500.0 C2018.7,2512.0 2034.7,2526.0 2040.0,2530.0" fill="none" stroke="#1e961e" stroke-width="27.0" stroke-linecap="round" stroke-linejoin="round" filter="url(#bl6)"/>
<path d="M1810.0,2530.0 C1807.3,2520.7 1791.3,2474.7 1790.0,2460.0 C1788.7,2445.3 1794.7,2426.4 1800.0,2420.0 C1805.3,2413.6 1816.7,2409.3 1830.0,2412.0 C1843.3,2414.7 1877.3,2428.3 1900.0,2440.0 C1922.7,2451.7 1981.3,2488.0 2000.0,2500.0 C2018.7,2512.0 2034.7,2526.0 2040.0,2530.0" transform="translate(2,-2)" fill="none" stroke="#30b830" stroke-width="9.0" stroke-linecap="round" stroke-linejoin="round" filter="url(#bl4)"/>
</g>
<path d="M1233.0,1405.0 C1215.8,1410.5 1163.4,1439.2 1141.0,1456.0 C1118.6,1472.8 1082.5,1509.8 1065.0,1531.0 C1047.5,1552.2 1020.1,1592.5 1010.0,1615.0 C999.9,1637.5 991.1,1683.1 989.0,1700.0 C986.9,1716.9 989.5,1729.1 994.0,1742.0 C998.5,1754.9 1010.7,1781.3 1023.0,1797.0 C1035.3,1812.7 1067.5,1845.5 1086.0,1860.0 C1104.5,1874.5 1142.9,1896.5 1162.0,1906.0 C1181.1,1915.5 1212.6,1925.7 1229.0,1931.0 C1245.4,1936.3 1275.5,1963.5 1285.0,1946.0 C1294.5,1928.5 1299.3,1846.1 1300.0,1800.0 C1300.7,1753.9 1292.4,1640.0 1290.0,1600.0 C1287.6,1560.0 1284.7,1524.7 1282.0,1500.0 C1279.3,1475.3 1276.5,1427.7 1270.0,1415.0 C1263.5,1402.3 1250.2,1399.5 1233.0,1405.0Z" fill="url(#gH3)"/>
<path d="M1141.0,1554.0 C1134.8,1550.7 1145.1,1501.4 1150.0,1490.0 C1154.9,1478.6 1179.5,1448.0 1190.0,1440.0 C1200.5,1432.0 1247.5,1409.0 1255.0,1410.0 C1262.5,1411.0 1264.9,1440.2 1265.0,1450.0 C1265.1,1459.8 1261.3,1500.7 1256.0,1508.0 C1250.7,1515.3 1223.5,1518.4 1212.0,1523.0 C1200.5,1527.6 1147.2,1557.3 1141.0,1554.0Z" fill="url(#gH3f)"/>
<path d="M1141.0,1554.0 C1147.4,1547.1 1200.5,1527.6 1212.0,1523.0 C1223.5,1518.4 1251.0,1488.1 1256.0,1508.0 C1261.0,1527.9 1266.4,1704.0 1262.0,1722.0 C1257.6,1740.0 1221.2,1697.2 1212.0,1688.0 C1202.8,1678.8 1176.4,1639.6 1170.0,1630.0 C1163.6,1620.4 1150.9,1599.6 1148.0,1592.0 C1145.1,1584.4 1134.6,1560.9 1141.0,1554.0Z" fill="#000"/>
<path d="M1215.0,1522.0 C1216.7,1538.3 1220.8,1586.7 1225.0,1620.0 C1229.2,1653.3 1237.5,1705.0 1240.0,1722.0" fill="none" stroke="#0a3a0a" stroke-width="26.0" stroke-linecap="round" stroke-linejoin="round"/>
<g mask="url(#tm4)">
<path d="M1215.0,1522.0 C1216.7,1538.3 1220.8,1586.7 1225.0,1620.0 C1229.2,1653.3 1237.5,1705.0 1240.0,1722.0" fill="none" stroke="#176017" stroke-width="14.3" stroke-linecap="round" stroke-linejoin="round" filter="url(#bl4)"/>
<path d="M1215.0,1522.0 C1216.7,1538.3 1220.8,1586.7 1225.0,1620.0 C1229.2,1653.3 1237.5,1705.0 1240.0,1722.0" transform="translate(3,0)" fill="none" stroke="#208020" stroke-width="5.2" stroke-linecap="round" stroke-linejoin="round" filter="url(#bl3)"/>
</g>
<path d="M1141.0,1556.0 C1142.2,1545.8 1139.8,1513.5 1148.0,1495.0 C1156.2,1476.5 1172.2,1459.2 1190.0,1445.0 C1207.8,1430.8 1244.2,1415.8 1255.0,1410.0" fill="none" stroke="#2cb02c" stroke-width="7" filter="url(#bl3)"/>
<path d="M1444.0,1140.0 C1459.0,1095.5 1527.3,1113.3 1560.0,1105.0 C1592.7,1096.7 1616.7,1074.2 1640.0,1090.0 C1663.3,1105.8 1680.0,1160.0 1700.0,1200.0 C1720.0,1240.0 1766.7,1303.3 1760.0,1330.0 C1753.3,1356.7 1708.3,1353.0 1660.0,1360.0 C1611.7,1367.0 1506.0,1408.7 1470.0,1372.0 C1434.0,1335.3 1429.0,1184.5 1444.0,1140.0Z" fill="url(#gH2in)"/>
<circle cx="1460" cy="1462" r="205" fill="url(#gBlue)"/>
<path d="M1272.0,1374.0 C1269.6,1370.0 1278.6,1317.9 1285.0,1300.0 C1291.4,1282.1 1308.7,1254.7 1320.0,1240.0 C1331.3,1225.3 1355.2,1202.8 1370.0,1190.0 C1384.8,1177.2 1416.1,1154.5 1431.0,1144.0 C1445.9,1133.5 1470.1,1117.3 1482.0,1111.0 C1493.9,1104.7 1508.9,1099.3 1520.0,1097.0 C1531.1,1094.7 1553.4,1093.6 1565.0,1094.0 C1576.6,1094.4 1601.0,1097.2 1607.0,1100.0 C1613.0,1102.8 1616.3,1113.3 1610.0,1115.0 C1603.7,1116.7 1574.7,1111.7 1560.0,1113.0 C1545.3,1114.3 1513.3,1118.7 1500.0,1125.0 C1486.7,1131.3 1467.9,1149.6 1460.0,1160.0 C1452.1,1170.4 1443.9,1190.5 1441.0,1203.0 C1438.1,1215.5 1437.7,1240.4 1438.0,1254.0 C1438.3,1267.6 1439.3,1290.9 1443.0,1305.0 C1446.7,1319.1 1471.1,1350.8 1466.0,1360.0 C1460.9,1369.2 1415.1,1376.9 1405.0,1374.0 C1394.9,1371.1 1394.4,1347.2 1390.0,1338.0 C1385.6,1328.8 1377.2,1310.7 1372.0,1305.0 C1366.8,1299.3 1360.2,1291.7 1351.0,1295.0 C1341.8,1298.3 1313.5,1319.5 1303.0,1330.0 C1292.5,1340.5 1274.4,1378.0 1272.0,1374.0Z" fill="url(#gH2)"/>
<path d="M1500.0,1122.0 C1493.3,1127.5 1469.8,1141.5 1460.0,1155.0 C1450.2,1168.5 1444.7,1186.5 1441.0,1203.0 C1437.3,1219.5 1437.7,1237.0 1438.0,1254.0 C1438.3,1271.0 1438.3,1287.3 1443.0,1305.0 C1447.7,1322.7 1462.2,1350.8 1466.0,1360.0" fill="none" stroke="#34d034" stroke-width="8" filter="url(#bl3)"/>
<path d="M1460.0,1130.0 C1470.0,1125.7 1502.0,1109.3 1520.0,1104.0 C1538.0,1098.7 1553.5,1098.2 1568.0,1098.0 C1582.5,1097.8 1600.5,1102.2 1607.0,1103.0" fill="none" stroke="#2ab02a" stroke-width="9" filter="url(#bl3)"/>
<circle cx="1420" cy="1800" r="178" fill="url(#gG2)"/>
<circle cx="1730" cy="1545" r="245" fill="url(#gG3)"/>
<circle cx="1490" cy="1552" r="208" fill="url(#gG1)"/>
<circle cx="1560" cy="1535" r="60" fill="url(#gG1s)"/>
<path d="M1990.0,1440.0 C2004.0,1435.2 2080.5,1451.1 2100.0,1452.0 C2119.5,1452.9 2181.0,1446.0 2185.0,1449.0 C2189.0,1452.0 2147.4,1475.9 2140.0,1482.0 C2132.6,1488.1 2120.2,1502.6 2111.0,1510.0 C2101.8,1517.4 2058.5,1548.9 2048.0,1556.0 C2037.5,1563.1 2012.8,1574.6 2006.0,1581.0 C1999.2,1587.4 1984.6,1628.1 1980.0,1620.0 C1975.4,1611.9 1959.0,1518.0 1960.0,1500.0 C1961.0,1482.0 1976.0,1444.8 1990.0,1440.0Z" fill="url(#gRib)"/>
<path d="M2183.0,1451.0 C2175.8,1456.2 2152.0,1472.2 2140.0,1482.0 C2128.0,1491.8 2126.3,1497.7 2111.0,1510.0 C2095.7,1522.3 2066.5,1544.0 2048.0,1556.0 C2029.5,1568.0 2008.0,1577.7 2000.0,1582.0" fill="none" stroke="#48f048" stroke-width="5" filter="url(#bl2)"/>
<circle cx="1794" cy="1527" r="227" fill="url(#gRed)"/>
<circle cx="1844" cy="1474" r="58" fill="url(#gReds)"/>
<circle cx="1547" cy="1968" r="263" fill="url(#gYel)"/>
<circle cx="1597" cy="1928" r="80" fill="url(#gYels)"/>
<path d="M1604.0,1060.0 C1605.8,1048.6 1611.5,1015.3 1622.0,1000.0 C1632.5,984.7 1671.7,947.1 1694.0,929.0 C1716.3,910.9 1788.7,859.6 1813.0,845.0 C1837.3,830.4 1880.5,810.4 1902.0,804.0 C1923.5,797.6 1977.5,789.3 1997.0,790.0 C2016.5,790.7 2052.3,799.4 2069.0,810.0 C2085.7,820.6 2124.7,861.6 2140.0,881.0 C2155.3,900.4 2189.6,953.1 2200.0,976.0 C2210.4,998.9 2224.2,1051.2 2229.0,1077.0 C2233.8,1102.8 2239.0,1173.1 2241.0,1197.0 C2243.0,1220.9 2233.3,1267.9 2246.0,1282.0 C2258.7,1296.1 2326.3,1312.8 2350.0,1318.0 C2373.7,1323.2 2425.9,1328.9 2449.0,1327.0 C2472.1,1325.1 2527.5,1307.1 2548.0,1302.0 C2568.5,1296.9 2627.1,1278.1 2625.0,1283.0 C2622.9,1287.9 2550.1,1332.3 2530.0,1344.0 C2509.9,1355.7 2479.8,1372.7 2453.0,1383.0 C2426.2,1393.3 2331.7,1424.3 2300.0,1432.0 C2268.3,1439.7 2210.4,1445.6 2181.0,1449.0 C2151.6,1452.4 2074.6,1460.4 2048.0,1461.0 C2021.4,1461.6 1976.3,1460.1 1953.0,1454.0 C1929.7,1447.9 1874.7,1425.8 1848.0,1409.0 C1821.3,1392.2 1742.9,1325.0 1724.0,1310.0 C1705.1,1295.0 1695.0,1289.5 1686.0,1280.0 C1677.0,1270.5 1655.0,1243.9 1647.0,1229.0 C1639.0,1214.1 1621.7,1167.3 1617.0,1152.0 C1612.3,1136.7 1608.5,1108.7 1607.0,1098.0 C1605.5,1087.3 1602.2,1071.4 1604.0,1060.0Z" fill="url(#gH1)"/>
<path d="M1843.0,905.0 C1841.0,920.0 1845.8,930.0 1848.0,940.0 C1850.2,950.0 1847.3,948.3 1856.0,965.0 C1864.7,981.7 1881.2,1010.5 1900.0,1040.0 C1918.8,1069.5 1946.8,1115.2 1969.0,1142.0 C1991.2,1168.8 2009.5,1183.0 2033.0,1201.0 C2056.5,1219.0 2077.3,1235.8 2110.0,1250.0 C2142.7,1264.2 2207.2,1294.8 2229.0,1286.0 C2250.8,1277.2 2241.0,1231.8 2241.0,1197.0 C2241.0,1162.2 2235.8,1113.8 2229.0,1077.0 C2222.2,1040.2 2214.8,1008.7 2200.0,976.0 C2185.2,943.3 2161.8,907.3 2140.0,881.0 C2118.2,854.7 2092.8,831.5 2069.0,818.0 C2045.2,804.5 2024.8,801.0 1997.0,800.0 C1969.2,799.0 1924.8,803.7 1902.0,812.0 C1879.2,820.3 1869.8,834.5 1860.0,850.0 C1850.2,865.5 1845.0,890.0 1843.0,905.0Z" fill="url(#gH1in)"/>
<path d="M2200.0,1270.0 L2246.0,1284.0 L2354.0,1322.0 L2449.0,1327.0 L2548.0,1300.0 L2633.0,1258.0 L2698.0,1193.0 L2710.0,1200.0 L2624.0,1285.0 L2555.0,1334.0 L2453.0,1384.0 L2300.0,1434.0 L2200.0,1441.0Z" fill="url(#gLow)" mask="url(#mLow)"/>
<path d="M2524.0,1078.0 C2543.8,1067.1 2749.8,1038.3 2767.0,1036.0 C2784.2,1033.7 2783.3,1037.9 2782.0,1044.0 C2780.7,1050.1 2752.6,1118.1 2747.0,1128.0 C2741.4,1137.9 2705.6,1184.3 2698.0,1193.0 C2690.4,1201.7 2643.0,1250.9 2633.0,1258.0 C2623.0,1265.1 2560.3,1295.4 2548.0,1300.0 C2535.7,1304.6 2461.9,1325.5 2449.0,1327.0 C2436.1,1328.5 2357.3,1322.8 2354.0,1322.0 C2350.7,1321.2 2391.3,1323.1 2399.0,1315.0 C2406.7,1306.9 2461.7,1215.8 2470.0,1200.0 C2478.3,1184.2 2504.2,1088.9 2524.0,1078.0Z" fill="url(#gC)"/>
<path d="M2524.0,1078.0 C2515.0,1098.3 2490.8,1160.5 2470.0,1200.0 C2449.2,1239.5 2410.8,1295.8 2399.0,1315.0" fill="none" stroke="#0e4a0e" stroke-width="8" filter="url(#bl4)"/>
<g clip-path="url(#cH1)">
<path d="M1843.0,900.0 C1843.8,906.7 1845.8,929.2 1848.0,940.0 C1850.2,950.8 1847.3,948.3 1856.0,965.0 C1864.7,981.7 1881.2,1010.5 1900.0,1040.0 C1918.8,1069.5 1946.8,1115.2 1969.0,1142.0 C1991.2,1168.8 2009.5,1183.0 2033.0,1201.0 C2056.5,1219.0 2074.5,1235.2 2110.0,1250.0 C2145.5,1264.8 2205.3,1278.0 2246.0,1290.0 C2286.7,1302.0 2320.2,1315.8 2354.0,1322.0 C2387.8,1328.2 2416.7,1330.7 2449.0,1327.0 C2481.3,1323.3 2517.3,1311.5 2548.0,1300.0 C2578.7,1288.5 2608.0,1275.8 2633.0,1258.0 C2658.0,1240.2 2679.0,1214.7 2698.0,1193.0 C2717.0,1171.3 2733.0,1152.8 2747.0,1128.0 C2761.0,1103.2 2776.2,1058.0 2782.0,1044.0" transform="translate(-6,6)" fill="none" stroke="#26b026" stroke-width="30" stroke-linecap="round" filter="url(#bl10)" opacity="0.7"/>
<path d="M1843.0,900.0 C1843.8,906.7 1845.8,929.2 1848.0,940.0 C1850.2,950.8 1847.3,948.3 1856.0,965.0 C1864.7,981.7 1881.2,1010.5 1900.0,1040.0 C1918.8,1069.5 1946.8,1115.2 1969.0,1142.0 C1991.2,1168.8 2009.5,1183.0 2033.0,1201.0 C2056.5,1219.0 2074.5,1235.2 2110.0,1250.0 C2145.5,1264.8 2223.3,1283.3 2246.0,1290.0" transform="translate(5,-3)" fill="none" stroke="#000" stroke-width="8" stroke-linecap="round" filter="url(#bl4)" opacity="0.6"/>
<path d="M1843.0,900.0 C1843.8,906.7 1845.8,929.2 1848.0,940.0 C1850.2,950.8 1847.3,948.3 1856.0,965.0 C1864.7,981.7 1881.2,1010.5 1900.0,1040.0 C1918.8,1069.5 1946.8,1115.2 1969.0,1142.0 C1991.2,1168.8 2009.5,1183.0 2033.0,1201.0 C2056.5,1219.0 2074.5,1235.2 2110.0,1250.0 C2145.5,1264.8 2205.3,1278.0 2246.0,1290.0 C2286.7,1302.0 2320.2,1315.8 2354.0,1322.0 C2387.8,1328.2 2416.7,1330.7 2449.0,1327.0 C2481.3,1323.3 2517.3,1311.5 2548.0,1300.0 C2578.7,1288.5 2608.0,1275.8 2633.0,1258.0 C2658.0,1240.2 2679.0,1214.7 2698.0,1193.0 C2717.0,1171.3 2733.0,1152.8 2747.0,1128.0 C2761.0,1103.2 2776.2,1058.0 2782.0,1044.0" fill="none" stroke="#32d832" stroke-width="9" stroke-linecap="round" filter="url(#bl3)"/>
<path d="M1843.0,900.0 C1843.8,906.7 1845.8,929.2 1848.0,940.0 C1850.2,950.8 1847.3,948.3 1856.0,965.0 C1864.7,981.7 1881.2,1010.5 1900.0,1040.0 C1918.8,1069.5 1946.8,1115.2 1969.0,1142.0 C1991.2,1168.8 2009.5,1183.0 2033.0,1201.0 C2056.5,1219.0 2074.5,1235.2 2110.0,1250.0 C2145.5,1264.8 2205.3,1278.0 2246.0,1290.0 C2286.7,1302.0 2320.2,1315.8 2354.0,1322.0 C2387.8,1328.2 2416.7,1330.7 2449.0,1327.0 C2481.3,1323.3 2517.3,1311.5 2548.0,1300.0 C2578.7,1288.5 2608.0,1275.8 2633.0,1258.0 C2658.0,1240.2 2679.0,1214.7 2698.0,1193.0 C2717.0,1171.3 2733.0,1152.8 2747.0,1128.0 C2761.0,1103.2 2776.2,1058.0 2782.0,1044.0" fill="none" stroke="#58ff58" stroke-width="3" stroke-linecap="round" filter="url(#bl1)"/>
<path d="M1843.0,905.0 C1852.8,890.0 1876.3,833.2 1902.0,815.0 C1927.7,796.8 1969.2,796.0 1997.0,796.0 C2024.8,796.0 2045.2,800.3 2069.0,815.0 C2092.8,829.7 2118.2,856.8 2140.0,884.0 C2161.8,911.2 2185.2,945.8 2200.0,978.0 C2214.8,1010.2 2222.2,1040.5 2229.0,1077.0 C2235.8,1113.5 2238.2,1162.3 2241.0,1197.0 C2243.8,1231.7 2245.2,1270.3 2246.0,1285.0" fill="none" stroke="#2cc02c" stroke-width="10" stroke-linecap="round" filter="url(#bl3)"/>
<path d="M1604.0,1100.0 C1605.3,1085.0 1597.7,1039.2 1612.0,1010.0 C1626.3,980.8 1656.5,953.3 1690.0,925.0 C1723.5,896.7 1777.7,860.8 1813.0,840.0 C1848.3,819.2 1871.3,809.0 1902.0,800.0 C1932.7,791.0 1981.2,788.3 1997.0,786.0" fill="none" stroke="#26a826" stroke-width="14" filter="url(#bl6)"/>
</g>
<path d="M2266.0,2230.0 C2271.1,2219.1 2326.7,2143.5 2343.0,2137.0 C2359.3,2130.5 2496.3,2131.7 2511.0,2132.0 C2525.7,2132.3 2553.1,2131.5 2563.0,2141.0 C2572.9,2150.5 2647.5,2256.8 2659.0,2274.0 C2670.5,2291.2 2725.6,2382.6 2735.0,2399.0 C2744.4,2415.4 2824.0,2511.9 2800.0,2520.0 C2776.0,2528.1 2408.5,2527.1 2375.0,2520.0 C2341.5,2512.9 2305.3,2428.7 2298.0,2414.0 C2290.7,2399.3 2268.1,2312.3 2266.0,2300.0 C2263.9,2287.7 2260.9,2240.9 2266.0,2230.0Z" fill="url(#gBR2)"/>
<path d="M2935.0,1825.0 C2937.2,1817.2 2939.7,1788.5 2948.0,1778.0 C2956.3,1767.5 2968.0,1761.7 2985.0,1762.0 C3002.0,1762.3 3029.2,1771.2 3050.0,1780.0 C3070.8,1788.8 3093.3,1801.7 3110.0,1815.0 C3126.7,1828.3 3137.5,1843.3 3150.0,1860.0 C3162.5,1876.7 3179.2,1905.8 3185.0,1915.0" fill="none" stroke="#0c480c" stroke-width="40.0" stroke-linecap="round" stroke-linejoin="round"/>
<g mask="url(#tm5)">
<path d="M2935.0,1825.0 C2937.2,1817.2 2939.7,1788.5 2948.0,1778.0 C2956.3,1767.5 2968.0,1761.7 2985.0,1762.0 C3002.0,1762.3 3029.2,1771.2 3050.0,1780.0 C3070.8,1788.8 3093.3,1801.7 3110.0,1815.0 C3126.7,1828.3 3137.5,1843.3 3150.0,1860.0 C3162.5,1876.7 3179.2,1905.8 3185.0,1915.0" fill="none" stroke="#1c8a1c" stroke-width="24.0" stroke-linecap="round" stroke-linejoin="round" filter="url(#bl5)"/>
<path d="M2935.0,1825.0 C2937.2,1817.2 2939.7,1788.5 2948.0,1778.0 C2956.3,1767.5 2968.0,1761.7 2985.0,1762.0 C3002.0,1762.3 3029.2,1771.2 3050.0,1780.0 C3070.8,1788.8 3093.3,1801.7 3110.0,1815.0 C3126.7,1828.3 3137.5,1843.3 3150.0,1860.0 C3162.5,1876.7 3179.2,1905.8 3185.0,1915.0" transform="translate(2,-2)" fill="none" stroke="#2aa82a" stroke-width="8.0" stroke-linecap="round" stroke-linejoin="round" filter="url(#bl3)"/>
</g>
<path d="M2686.0,2150.0 C2696.9,2155.3 2773.3,2191.1 2795.0,2203.0 C2816.7,2214.9 2884.0,2258.6 2903.0,2269.0 C2922.0,2279.4 2968.6,2301.3 2985.0,2307.0 C3001.4,2312.7 3054.8,2323.9 3067.0,2326.0 C3079.2,2328.1 3101.3,2326.9 3107.0,2328.0 C3112.7,2329.1 3125.3,2341.3 3124.0,2337.0 C3122.7,2332.7 3097.0,2290.2 3094.0,2285.0" fill="none" stroke="#0a3a0a" stroke-width="30.0" stroke-linecap="round" stroke-linejoin="round"/>
<g mask="url(#tm6)">
<path d="M2686.0,2150.0 C2696.9,2155.3 2773.3,2191.1 2795.0,2203.0 C2816.7,2214.9 2884.0,2258.6 2903.0,2269.0 C2922.0,2279.4 2968.6,2301.3 2985.0,2307.0 C3001.4,2312.7 3054.8,2323.9 3067.0,2326.0 C3079.2,2328.1 3101.3,2326.9 3107.0,2328.0 C3112.7,2329.1 3125.3,2341.3 3124.0,2337.0 C3122.7,2332.7 3097.0,2290.2 3094.0,2285.0" fill="none" stroke="#176c17" stroke-width="18.0" stroke-linecap="round" stroke-linejoin="round" filter="url(#bl5)"/>
<path d="M2686.0,2150.0 C2696.9,2155.3 2773.3,2191.1 2795.0,2203.0 C2816.7,2214.9 2884.0,2258.6 2903.0,2269.0 C2922.0,2279.4 2968.6,2301.3 2985.0,2307.0 C3001.4,2312.7 3054.8,2323.9 3067.0,2326.0 C3079.2,2328.1 3101.3,2326.9 3107.0,2328.0 C3112.7,2329.1 3125.3,2341.3 3124.0,2337.0 C3122.7,2332.7 3097.0,2290.2 3094.0,2285.0" transform="translate(2,-2)" fill="none" stroke="#1f8a1f" stroke-width="6.0" stroke-linecap="round" stroke-linejoin="round" filter="url(#bl3)"/>
</g>
<path d="M2610.0,2130.0 C2616.2,2137.9 2659.0,2195.1 2672.0,2209.0 C2685.0,2222.9 2726.4,2259.2 2740.0,2269.0 C2753.6,2278.8 2794.4,2302.4 2808.0,2307.0 C2821.6,2311.6 2862.4,2315.0 2876.0,2315.0 C2889.6,2315.0 2931.7,2310.0 2944.0,2307.0 C2956.3,2304.0 2989.4,2289.7 2999.0,2285.0 C3008.6,2280.3 3035.9,2262.5 3040.0,2260.0" fill="none" stroke="#0c4a0c" stroke-width="40.0" stroke-linecap="round" stroke-linejoin="round"/>
<g mask="url(#tm7)">
<path d="M2610.0,2130.0 C2616.2,2137.9 2659.0,2195.1 2672.0,2209.0 C2685.0,2222.9 2726.4,2259.2 2740.0,2269.0 C2753.6,2278.8 2794.4,2302.4 2808.0,2307.0 C2821.6,2311.6 2862.4,2315.0 2876.0,2315.0 C2889.6,2315.0 2931.7,2310.0 2944.0,2307.0 C2956.3,2304.0 2989.4,2289.7 2999.0,2285.0 C3008.6,2280.3 3035.9,2262.5 3040.0,2260.0" fill="none" stroke="#1c8c1c" stroke-width="24.0" stroke-linecap="round" stroke-linejoin="round" filter="url(#bl5)"/>
<path d="M2610.0,2130.0 C2616.2,2137.9 2659.0,2195.1 2672.0,2209.0 C2685.0,2222.9 2726.4,2259.2 2740.0,2269.0 C2753.6,2278.8 2794.4,2302.4 2808.0,2307.0 C2821.6,2311.6 2862.4,2315.0 2876.0,2315.0 C2889.6,2315.0 2931.7,2310.0 2944.0,2307.0 C2956.3,2304.0 2989.4,2289.7 2999.0,2285.0 C3008.6,2280.3 3035.9,2262.5 3040.0,2260.0" transform="translate(2,-2)" fill="none" stroke="#2aac2a" stroke-width="8.0" stroke-linecap="round" stroke-linejoin="round" filter="url(#bl3)"/>
</g>
<path d="M2266.0,2292.0 C2264.2,2293.5 2268.8,2212.4 2272.0,2195.0 C2275.2,2177.6 2288.3,2137.3 2298.0,2118.0 C2307.7,2098.7 2352.9,2026.5 2369.0,2002.0 C2385.1,1977.5 2440.9,1893.5 2459.0,1873.0 C2477.1,1852.5 2535.5,1806.5 2550.0,1797.0 C2564.5,1787.5 2591.0,1780.5 2604.0,1778.0 C2617.0,1775.5 2663.1,1772.2 2680.0,1772.0 C2696.9,1771.8 2753.4,1773.8 2773.0,1776.0 C2792.6,1778.2 2852.1,1788.4 2876.0,1794.0 C2899.9,1799.6 2990.2,1824.9 3012.0,1832.0 C3033.8,1839.1 3076.2,1857.6 3094.0,1865.0 C3111.8,1872.4 3180.4,1874.9 3190.0,1906.0 C3199.6,1937.1 3199.6,2138.1 3190.0,2176.0 C3180.4,2213.9 3106.3,2273.8 3094.0,2285.0 C3081.7,2296.2 3076.5,2290.2 3067.0,2288.0 C3057.5,2285.8 3020.8,2270.9 2999.0,2263.0 C2977.2,2255.1 2880.3,2219.6 2849.0,2209.0 C2817.7,2198.4 2714.6,2163.8 2686.0,2157.0 C2657.4,2150.2 2597.3,2143.0 2563.0,2141.0 C2528.7,2139.0 2370.3,2133.1 2343.0,2137.0 C2315.7,2140.9 2297.7,2164.5 2290.0,2180.0 C2282.3,2195.5 2267.8,2290.5 2266.0,2292.0Z" fill="url(#gBR)"/>
<path d="M1454,1454 h3 v21 h27 v9 h-30z" fill="#ff3aa0"/>
<rect x="1457" y="1454" width="9" height="21" fill="#fff"/>
<rect x="1460" y="1475" width="18" height="3" fill="#000"/>
<path d="M1509,1571 h3 v21 h27 v9 h-30z" fill="#ff3aa0"/>
<rect x="1512" y="1571" width="9" height="21" fill="#fff"/>
<rect x="1515" y="1592" width="18" height="3" fill="#000"/>
<path d="M1720,1533 h3 v21 h27 v9 h-30z" fill="#ff3aa0"/>
<rect x="1723" y="1533" width="9" height="21" fill="#fff"/>
<rect x="1726" y="1554" width="18" height="3" fill="#000"/>
<path d="M1778,1512 h3 v21 h27 v9 h-30z" fill="#ff3aa0"/>
<rect x="1781" y="1512" width="9" height="21" fill="#fff"/>
<rect x="1784" y="1533" width="18" height="3" fill="#000"/>
<path d="M1471,1778 h3 v21 h27 v9 h-30z" fill="#ff3aa0"/>
<rect x="1474" y="1778" width="9" height="21" fill="#fff"/>
<rect x="1477" y="1799" width="18" height="3" fill="#000"/>
<path d="M1532,1948 h3 v21 h27 v9 h-30z" fill="#ff3aa0"/>
<rect x="1535" y="1948" width="9" height="21" fill="#fff"/>
<rect x="1538" y="1969" width="18" height="3" fill="#000"/>
<rect x="971.5" y="1149" width="1292.5" height="1133" fill="none" stroke="#e31c1c" stroke-width="12"/></svg></div>
<div class="a" style="left:0;top:0;width:3182px;height:134px;background:#000;"></div>
<div class="a px" style="left:6px;top:13px;color:#fff;">/1HEW/A/A/1    6    11   16   21   26   31   36   41   46   51   56   61   66   71   76   81   86   91   96   101  106  111  116</div>
<div class="a px" style="left:246px;top:52px;color:#46ec46;">KVFGRCELAAAMKRHGLDNYRGYSLGNWVCAAKFESNFNTQATNRNTDGSTDYGILQINSRWWCNDGRTPGSRNLCNIPCSALLSSDITASVNCAKKIVSDGNGMNAWVAWRNRCKGTDVQA</div>
<div class="a" style="left:942px;top:47px;width:24px;height:38px;background:#33ff33;"></div>
<div class="a px" style="left:942px;top:52px;color:#000;">C</div>
<div class="a" style="left:6px;top:91px;width:3168px;height:40px;background:#1a1a1a;"></div>
<div class="a" style="left:6px;top:91px;width:1583px;height:40px;background:#808080;box-shadow:inset 0 2px 0 #b0b0b0;"></div>
<div class="a" style="left:470px;top:91px;width:11px;height:40px;background:#5fa05f;"></div>
<div class="a" style="left:3181px;top:0;width:659px;height:1479px;background:#333;border-left:2px solid #222;"></div>
<div class="a" style="left:3183px;top:1px;width:400px;height:52px;background:#808080;box-shadow:inset 0 2px 0 #9a9a9a;"></div>
<div class="a px" style="left:3189px;top:14px;color:#fff;">all</div>
<div class="a px" style="left:3586px;top:1px;width:48px;height:52px;background:#8080ff;color:#000;text-align:center;line-height:62px;overflow:hidden;">A</div>
<div class="a px" style="left:3637px;top:1px;width:48px;height:52px;background:#9999cc;color:#000;text-align:center;line-height:62px;overflow:hidden;">S</div>
<div class="a px" style="left:3688px;top:1px;width:48px;height:52px;background:#666699;color:#000;text-align:center;line-height:62px;overflow:hidden;">H</div>
<div class="a px" style="left:3739px;top:1px;width:48px;height:52px;background:#8080ff;color:#000;text-align:center;line-height:62px;overflow:hidden;">L</div>
<svg class="a" style="left:3790px;top:1px;" width="48" height="52"><defs><linearGradient id="cb650" x1="0" x2="1"><stop offset="0" stop-color="#ff1a1a"/><stop offset="1" stop-color="#1a1aff"/></linearGradient><linearGradient id="ct650" x1="0" x2="1"><stop offset="0" stop-color="#1aff1a"/><stop offset="1" stop-color="#ffff1a"/></linearGradient><linearGradient id="cm650" x1="0" y1="0" x2="0" y2="1"><stop offset="0" stop-color="#fff"/><stop offset="1" stop-color="#000"/></linearGradient><mask id="mk650"><rect width="48" height="52" fill="url(#cm650)"/></mask></defs><rect width="48" height="52" fill="url(#cb650)"/><rect width="48" height="52" fill="url(#ct650)" mask="url(#mk650)"/></svg>
<div class="a px" style="left:3790px;top:1px;width:48px;height:52px;color:#000;text-align:center;line-height:62px;">C</div>
<div class="a" style="left:3183px;top:55px;width:400px;height:52px;background:#808080;box-shadow:inset 0 2px 0 #9a9a9a;"></div>
<div class="a px" style="left:3189px;top:68px;color:#fff;">1HEW <span style="color:#44dd44">1/1</span></div>
<div class="a px" style="left:3586px;top:55px;width:48px;height:52px;background:#8080ff;color:#000;text-align:center;line-height:62px;overflow:hidden;">A</div>
<div class="a px" style="left:3637px;top:55px;width:48px;height:52px;background:#9999cc;color:#000;text-align:center;line-height:62px;overflow:hidden;">S</div>
<div class="a px" style="left:3688px;top:55px;width:48px;height:52px;background:#666699;color:#000;text-align:center;line-height:62px;overflow:hidden;">H</div>
<div class="a px" style="left:3739px;top:55px;width:48px;height:52px;background:#8080ff;color:#000;text-align:center;line-height:62px;overflow:hidden;">L</div>
<svg class="a" style="left:3790px;top:55px;" width="48" height="52"><defs><linearGradient id="cb704" x1="0" x2="1"><stop offset="0" stop-color="#ff1a1a"/><stop offset="1" stop-color="#1a1aff"/></linearGradient><linearGradient id="ct704" x1="0" x2="1"><stop offset="0" stop-color="#1aff1a"/><stop offset="1" stop-color="#ffff1a"/></linearGradient><linearGradient id="cm704" x1="0" y1="0" x2="0" y2="1"><stop offset="0" stop-color="#fff"/><stop offset="1" stop-color="#000"/></linearGradient><mask id="mk704"><rect width="48" height="52" fill="url(#cm704)"/></mask></defs><rect width="48" height="52" fill="url(#cb704)"/><rect width="48" height="52" fill="url(#ct704)" mask="url(#mk704)"/></svg>
<div class="a px" style="left:3790px;top:55px;width:48px;height:52px;color:#000;text-align:center;line-height:62px;">C</div>
<div class="a" style="left:3183px;top:109px;width:400px;height:52px;background:#808080;box-shadow:inset 0 2px 0 #9a9a9a;"></div>
<div class="a px" style="left:3189px;top:122px;color:#fff;">(Cys30)</div>
<div class="a px" style="left:3586px;top:109px;width:48px;height:52px;background:#8080ff;color:#000;text-align:center;line-height:62px;overflow:hidden;">A</div>
<div class="a px" style="left:3637px;top:109px;width:48px;height:52px;background:#9999cc;color:#000;text-align:center;line-height:62px;overflow:hidden;">S</div>
<div class="a px" style="left:3688px;top:109px;width:48px;height:52px;background:#666699;color:#000;text-align:center;line-height:62px;overflow:hidden;">H</div>
<div class="a px" style="left:3739px;top:109px;width:48px;height:52px;background:#8080ff;color:#000;text-align:center;line-height:62px;overflow:hidden;">L</div>
<svg class="a" style="left:3790px;top:109px;" width="48" height="52"><defs><linearGradient id="cb758" x1="0" x2="1"><stop offset="0" stop-color="#ff1a1a"/><stop offset="1" stop-color="#1a1aff"/></linearGradient><linearGradient id="ct758" x1="0" x2="1"><stop offset="0" stop-color="#1aff1a"/><stop offset="1" stop-color="#ffff1a"/></linearGradient><linearGradient id="cm758" x1="0" y1="0" x2="0" y2="1"><stop offset="0" stop-color="#fff"/><stop offset="1" stop-color="#000"/></linearGradient><mask id="mk758"><rect width="48" height="52" fill="url(#cm758)"/></mask></defs><rect width="48" height="52" fill="url(#cb758)"/><rect width="48" height="52" fill="url(#ct758)" mask="url(#mk758)"/></svg>
<div class="a px" style="left:3790px;top:109px;width:48px;height:52px;color:#000;text-align:center;line-height:62px;">C</div>
<div class="a" style="left:3183px;top:1479px;width:657px;height:2px;background:#1c1c1c;"></div>
<div class="a" style="left:3181px;top:1481px;width:659px;height:429px;background:#333;border-left:2px solid #222;"></div>
<div class="a px" style="left:3187.0px;top:1490.7px;color:#44ee44;">Mouse Mode </div>
<div class="a px" style="left:3451.0px;top:1490.7px;color:#ff7777;">3-Button Viewing</div>
<div class="a px" style="left:3205.0px;top:1526.8px;color:#ff7777;">Buttons</div>
<div class="a px" style="left:3409.0px;top:1526.8px;color:#8888ff;">L</div>
<div class="a px" style="left:3529.0px;top:1526.8px;color:#8888ff;">M</div>
<div class="a px" style="left:3649.0px;top:1526.8px;color:#8888ff;">R</div>
<div class="a px" style="left:3724.6px;top:1526.8px;color:#8888ff;">Wheel</div>
<div class="a px" style="left:3225.4px;top:1562.9px;color:#ff7777;">&amp;</div>
<div class="a px" style="left:3261.4px;top:1562.9px;color:#ff7777;">Keys</div>
<div class="a px" style="left:3379.0px;top:1562.9px;color:#dddddd;">Rota Move MovZ Slab</div>
<div class="a px" style="left:3261.4px;top:1599.0px;color:#8888ff;">Shft</div>
<div class="a px" style="left:3379.0px;top:1599.0px;color:#dddddd;">+Box -Box Clip MovS</div>
<div class="a px" style="left:3261.4px;top:1635.1px;color:#8888ff;">Ctrl</div>
<div class="a px" style="left:3379.0px;top:1635.1px;color:#dddddd;">Move PkAt Pk1  MvSZ</div>
<div class="a px" style="left:3261.4px;top:1671.2px;color:#8888ff;">CtSh</div>
<div class="a px" style="left:3379.0px;top:1671.2px;color:#dddddd;">Sele Orig Clip MovZ</div>
<div class="a px" style="left:3189.4px;top:1707.3px;color:#8888ff;">SnglClk</div>
<div class="a px" style="left:3379.0px;top:1707.3px;color:#dddddd;">+/-  Cent Menu</div>
<div class="a px" style="left:3213.4px;top:1743.4px;color:#8888ff;">DblClk</div>
<div class="a px" style="left:3379.0px;top:1743.4px;color:#dddddd;">Menu   -  PkAt</div>
<div class="a px" style="left:3189.4px;top:1779.5px;color:#44ee44;">Selecting </div>
<div class="a px" style="left:3429.4px;top:1779.5px;color:#ff7777;">Residues</div>
<div class="a px" style="left:3189.4px;top:1815.6px;color:#44ee44;">State</div>
<div class="a px" style="left:3405.4px;top:1815.6px;color:#dddddd;">1/   1</div>
<div class="a" style="left:3181px;top:1851px;width:659px;height:2px;background:#111;"></div>
<svg class="a" style="left:3181px;top:1853px;" width="659" height="57" viewBox="3181 2502 659 57"><rect x="3181" y="2502" width="659" height="57" fill="#333"/><rect x="3182" y="2506" width="15" height="50" fill="#7c7c7c"/><rect x="3182" y="2506" width="15" height="2" fill="#aaa"/><rect x="3182" y="2506" width="2" height="50" fill="#aaa"/><rect x="3205" y="2506" width="69" height="50" fill="#7e7e7e"/><rect x="3205" y="2506" width="69" height="2" fill="#acacac"/><rect x="3205" y="2506" width="2" height="50" fill="#acacac"/><rect x="3273" y="2506" width="1.5" height="50" fill="#505050"/><rect x="3275" y="2506" width="69" height="50" fill="#7e7e7e"/><rect x="3275" y="2506" width="69" height="2" fill="#acacac"/><rect x="3275" y="2506" width="2" height="50" fill="#acacac"/><rect x="3343" y="2506" width="1.5" height="50" fill="#505050"/><rect x="3346" y="2506" width="69" height="50" fill="#7e7e7e"/><rect x="3346" y="2506" width="69" height="2" fill="#acacac"/><rect x="3346" y="2506" width="2" height="50" fill="#acacac"/><rect x="3414" y="2506" width="1.5" height="50" fill="#505050"/><rect x="3417" y="2506" width="69" height="50" fill="#7e7e7e"/><rect x="3417" y="2506" width="69" height="2" fill="#acacac"/><rect x="3417" y="2506" width="2" height="50" fill="#acacac"/><rect x="3485" y="2506" width="1.5" height="50" fill="#505050"/><rect x="3487" y="2506" width="69" height="50" fill="#7e7e7e"/><rect x="3487" y="2506" width="69" height="2" fill="#acacac"/><rect x="3487" y="2506" width="2" height="50" fill="#acacac"/><rect x="3555" y="2506" width="1.5" height="50" fill="#505050"/><rect x="3558" y="2506" width="69" height="50" fill="#7e7e7e"/><rect x="3558" y="2506" width="69" height="2" fill="#acacac"/><rect x="3558" y="2506" width="2" height="50" fill="#acacac"/><rect x="3626" y="2506" width="1.5" height="50" fill="#505050"/><rect x="3629" y="2506" width="69" height="50" fill="#a3a3a3"/><rect x="3629" y="2506" width="69" height="2" fill="#acacac"/><rect x="3629" y="2506" width="2" height="50" fill="#acacac"/><rect x="3697" y="2506" width="1.5" height="50" fill="#505050"/><rect x="3699" y="2506" width="69" height="50" fill="#7e7e7e"/><rect x="3699" y="2506" width="69" height="2" fill="#acacac"/><rect x="3699" y="2506" width="2" height="50" fill="#acacac"/><rect x="3767" y="2506" width="1.5" height="50" fill="#505050"/><rect x="3770" y="2506" width="70" height="50" fill="#7e7e7e"/><rect x="3770" y="2506" width="70" height="2" fill="#acacac"/><rect x="3770" y="2506" width="2" height="50" fill="#acacac"/><rect x="3839" y="2506" width="1.5" height="50" fill="#505050"/><rect x="3225" y="2519" width="1.5" height="26" fill="#ffbcc8"/><polygon points="3227,2532 3252,2519 3252,2545" fill="#ffbcc8"/><polygon points="3297,2532 3322,2519 3311.5,2532 3322,2545" fill="#ffbcc8"/><rect x="3367" y="2519" width="26" height="26" fill="#ffbcc8"/><polygon points="3438,2518.5 3464,2532 3438,2545.5" fill="#ffbcc8"/><polygon points="3507.5,2519 3533.5,2532 3507.5,2545 3517.5,2532" fill="#ffbcc8"/><polygon points="3578.7,2519 3604,2532 3578.7,2545" fill="#ffbcc8"/><rect x="3604" y="2519" width="1.5" height="26" fill="#ffbcc8"/><polygon points="3715,2519 3751,2519 3733,2545" fill="#ffbcc8"/><path d="M3670,2523 L3668,2520 L3656,2520 L3653,2523 L3653,2529 L3656,2532 L3668,2532 L3671,2535 L3671,2542 L3668,2545 L3656,2545 L3653,2542" fill="none" stroke="#ffbcc8" stroke-width="3"/><path d="M3794.5,2545 L3794.5,2519.5 L3812,2519.5 M3794.5,2531.5 L3807,2531.5" fill="none" stroke="#ffbcc8" stroke-width="3"/></svg>
<div class="a" style="left:0;top:1857px;width:3181px;height:1.5px;background:#888;"></div>
<div class="a" style="left:0;top:1858.5px;width:3181px;height:52px;background:#000;"></div>
<div class="a px" style="left:10px;top:1864px;color:#dcd8f8;">PyMOL&gt;_</div>
</div>
</body></html>
